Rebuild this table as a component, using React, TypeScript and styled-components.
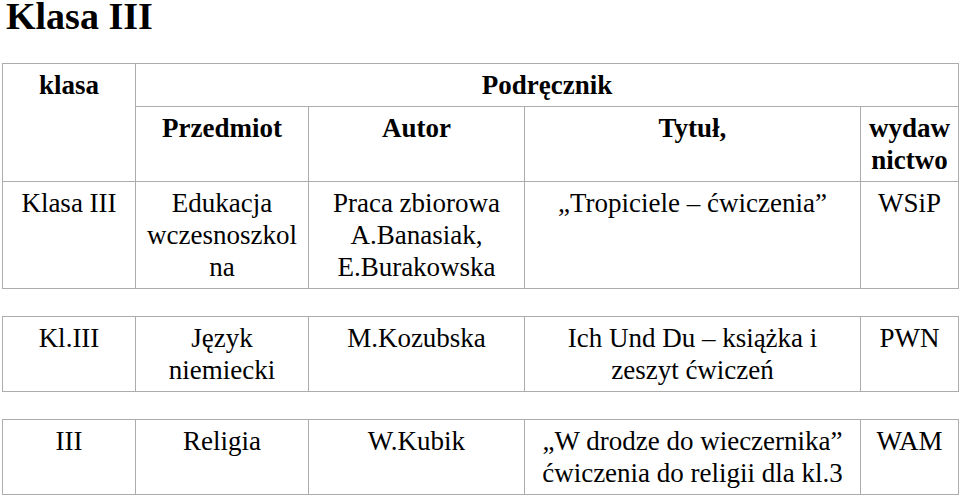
import React from "react";
import styled, { createGlobalStyle } from "styled-components";

const fontStack = () => `"Liberation Serif", "Noto Serif", "DejaVu Serif", serif`;

const Global = createGlobalStyle`
  html, body {
    margin: 0;
    padding: 0;
    background: #ffffff;
    color: #000000;
  }
`;

const Page = styled.div`
  display: flex;
  flex-direction: column;
  align-items: flex-start;
  gap: 27px;
  padding: 0 2px;
  width: 956px;
  height: 495px;
  overflow: hidden;
  font-family: ${fontStack};
`;

const Title = styled.h1`
  margin: -3px 0 1px 4px;
  font-family: ${fontStack};
  font-size: 38px;
  line-height: 38px;
  font-weight: bold;
`;

const Table = styled.table`
  border-collapse: collapse;
  table-layout: fixed;
  width: 956px;
  font-family: ${fontStack};
`;

const Col = styled.col<{ $w: number }>`
  width: ${(p) => p.$w}px;
`;

const Cell = styled.td<{ $head?: boolean }>`
  border: 1px solid #acacac;
  padding: 5px 6px;
  font-family: ${fontStack};
  font-size: 27px;
  line-height: 32px;
  font-weight: ${(p) => (p.$head ? "bold" : "normal")};
  text-align: center;
  vertical-align: top;
  white-space: nowrap;
`;

const widths = [133, 173, 216, 336, 98];

function Cols() {
  return (
    <colgroup>
      {widths.map((w, i) => (
        <Col key={i} $w={w} />
      ))}
    </colgroup>
  );
}

export default function App() {
  return (
    <>
      <Global />
      <Page>
        <Title>Klasa III</Title>
        <Table>
          <Cols />
          <tbody>
            <tr>
              <Cell $head rowSpan={2}>klasa</Cell>
              <Cell $head colSpan={4}>Podręcznik</Cell>
            </tr>
            <tr>
              <Cell $head>Przedmiot</Cell>
              <Cell $head>Autor</Cell>
              <Cell $head>Tytuł,</Cell>
              <Cell $head>
                wydaw
                <br />
                nictwo
              </Cell>
            </tr>
            <tr>
              <Cell>Klasa III</Cell>
              <Cell>
                Edukacja
                <br />
                wczesnoszkol
                <br />
                na
              </Cell>
              <Cell>
                Praca zbiorowa
                <br />
                A.Banasiak,
                <br />
                E.Burakowska
              </Cell>
              <Cell>„Tropiciele – ćwiczenia”</Cell>
              <Cell>WSiP</Cell>
            </tr>
          </tbody>
        </Table>
        <Table>
          <Cols />
          <tbody>
            <tr>
              <Cell>Kl.III</Cell>
              <Cell>
                Język
                <br />
                niemiecki
              </Cell>
              <Cell>M.Kozubska</Cell>
              <Cell>
                Ich Und Du – książka i
                <br />
                zeszyt ćwiczeń
              </Cell>
              <Cell>PWN</Cell>
            </tr>
          </tbody>
        </Table>
        <Table>
          <Cols />
          <tbody>
            <tr>
              <Cell>III</Cell>
              <Cell>Religia</Cell>
              <Cell>W.Kubik</Cell>
              <Cell>
                „W drodze do wieczernika”
                <br />
                ćwiczenia do religii dla kl.3
              </Cell>
              <Cell>WAM</Cell>
            </tr>
          </tbody>
        </Table>
      </Page>
    </>
  );
}
